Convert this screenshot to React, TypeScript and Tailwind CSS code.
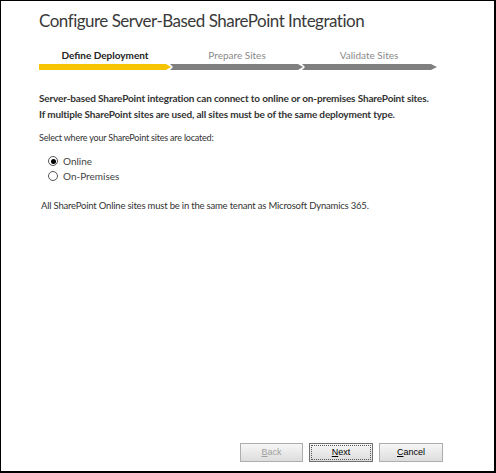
import React, { useState } from 'react';

const steps = [
  { label: 'Define Deployment', active: true },
  { label: 'Prepare Sites', active: false },
  { label: 'Validate Sites', active: false },
];

const StepBar: React.FC = () => (
  <svg width="400" height="6" viewBox="0 0 400 6" className="block">
    <polygon points="0,0 127,0 132,3 127,6 0,6" fill="#f6c400" />
    <polygon points="131,0 259,0 264,3 259,6 131,6 134,3" fill="#808080" />
    <polygon points="263,0 392,0 398,3 392,6 263,6 266,3" fill="#808080" />
  </svg>
);

const App: React.FC = () => {
  const [location, setLocation] = useState<'online' | 'onprem'>('online');

  return (
    <div
      className="w-[496px] h-[473px] bg-white border-t border-l border-r-2 border-b-2 border-black flex flex-col text-[#333]"
      style={{ fontFamily: 'Lato, "Open Sans", sans-serif' }}
    >
      <h1 className="pl-[38px] pt-[8px] text-[17px] leading-[24px] font-normal tracking-[-0.5px] text-[#3a3a3a]">
        Configure Server-Based SharePoint Integration
      </h1>

      <div className="pl-[38px] mt-[15px]">
        <div className="grid grid-cols-[132px_132px_132px] w-[396px]">
          {steps.map((s) => (
            <div
              key={s.label}
              className={`text-center text-[10px] leading-[14px] ${s.active ? 'font-bold text-[#222]' : 'text-[#8a8a8a]'}`}
            >
              {s.label}
            </div>
          ))}
        </div>
        <div className="mt-[2px]">
          <StepBar />
        </div>
      </div>

      <div className="pl-[38px] pr-[20px] mt-[20px] text-[10px] leading-[16px] font-bold tracking-[-0.15px] text-[#333]">
        <p>Server-based SharePoint integration can connect to online or on-premises SharePoint sites.</p>
        <p>If multiple SharePoint sites are used, all sites must be of the same deployment type.</p>
      </div>

      <p className="pl-[38px] mt-[9px] text-[9px] leading-[14px] tracking-[-0.2px] text-[#333]">
        Select where your SharePoint sites are located:
      </p>

      <div className="pl-[47px] mt-[9px] flex flex-col gap-[1px] text-[10px] leading-[14px] text-[#444]">
        {[
          { key: 'online' as const, label: 'Online' },
          { key: 'onprem' as const, label: 'On-Premises' },
        ].map((o) => (
          <label key={o.key} className="flex items-center gap-[5px] cursor-pointer">
            <span
              onClick={() => setLocation(o.key)}
              className="w-[10px] h-[10px] rounded-full border border-[#555] bg-white flex items-center justify-center"
            >
              {location === o.key && <span className="w-[5px] h-[5px] rounded-full bg-black" />}
            </span>
            <span>{o.label}</span>
          </label>
        ))}
      </div>

      <p className="pl-[40px] mt-[16px] text-[9.5px] leading-[14px] tracking-[-0.2px] text-[#333]">
        All SharePoint Online sites must be in the same tenant as Microsoft Dynamics 365.
      </p>

      <div className="mt-auto mb-[9px] pr-[51px] flex justify-end gap-[6px]">
        <button
          disabled
          className="w-[63px] h-[19px] border border-[#adadad] bg-gradient-to-b from-[#f6f6f6] to-[#dddddd] text-[9px] text-[#a0a0a0]"
          style={{ fontFamily: '"Liberation Sans", Arial, sans-serif' }}
        >
          <span className="underline">B</span>ack
        </button>
        <button
          className="w-[64px] h-[19px] border border-[#707070] bg-gradient-to-b from-[#f6f6f6] to-[#dddddd] text-[9px] text-black p-[1px]"
          style={{ fontFamily: '"Liberation Sans", Arial, sans-serif' }}
        >
          <span className="w-full h-full border border-dotted border-[#555] flex items-center justify-center">
            <span>
              <span className="underline">N</span>ext
            </span>
          </span>
        </button>
        <button
          className="w-[64px] h-[19px] border border-[#adadad] bg-gradient-to-b from-[#f6f6f6] to-[#dddddd] text-[9px] text-black"
          style={{ fontFamily: '"Liberation Sans", Arial, sans-serif' }}
        >
          <span className="underline">C</span>ancel
        </button>
      </div>
    </div>
  );
};

export default App;
